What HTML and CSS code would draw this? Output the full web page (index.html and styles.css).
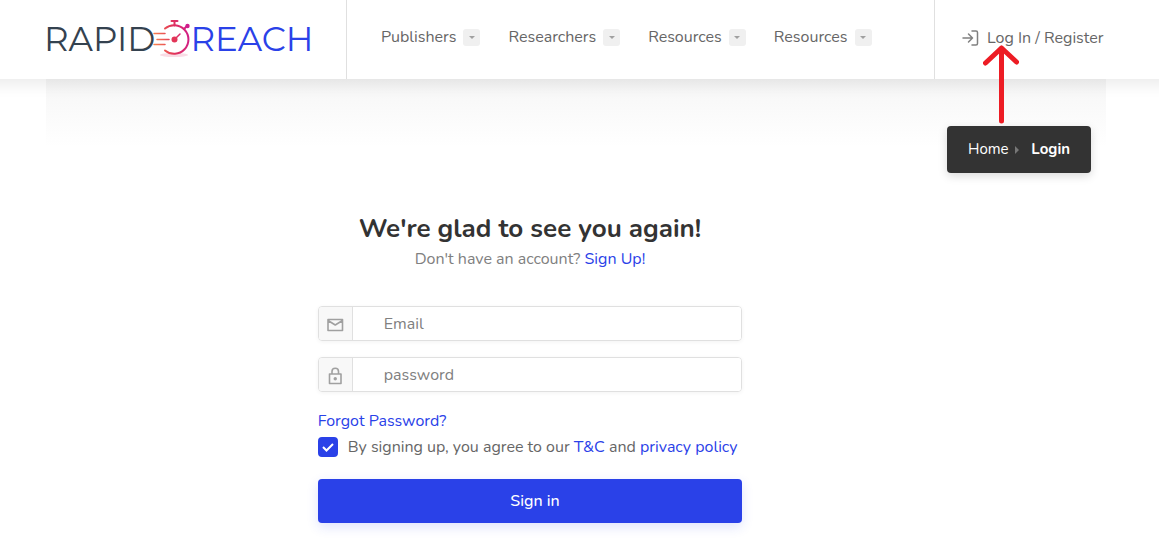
FILE: index.html
```html
<!DOCTYPE html>
<html lang="en">
<head>
  <meta charset="UTF-8">
  <meta name="viewport" content="width=device-width, initial-scale=1.0">
  <title>RapidoReach - Login</title>
  <link rel="stylesheet" href="styles.css">
</head>
<body>

  <!-- Header -->
  <header class="header">
    <a class="logo" href="#" aria-label="RapidoReach">
      <span class="logo-dark">RAPID</span>
      <svg class="logo-watch" width="40" height="40" viewBox="0 0 40 40" fill="none" stroke-linecap="round">
        <defs>
          <linearGradient id="watch" gradientUnits="userSpaceOnUse" x1="0" y1="20" x2="38" y2="16">
            <stop offset="0" stop-color="#f7864f"/>
            <stop offset="0.5" stop-color="#e23558"/>
            <stop offset="1" stop-color="#cf1c8c"/>
          </linearGradient>
        </defs>
        <ellipse cx="21" cy="36" rx="14" ry="2" fill="#f9dce5"/>
        <g stroke="url(#watch)" stroke-width="2">
          <path d="M12 9.500A14.300 14.300 0 1 1 12 31.500"/>
          <path d="M18.500 2h6M21.500 2.500v4M31 10l3-3" />
          <path d="M1 14.500h11M4 20.500h12M1 25.500h11" stroke-width="1.500"/>
          <path d="M21.500 20.500l5.500-5.500" stroke-width="1.500"/>
        </g>
        <circle cx="21.500" cy="20.500" r="3" fill="#e23558"/>
        <circle cx="34.500" cy="7" r="2.200" fill="#cf1c8c"/>
      </svg>
      <span class="logo-blue">REACH</span>
    </a>
    <nav class="nav">
      <a href="#">Publishers <span class="caret"></span></a>
      <a href="#">Researchers <span class="caret"></span></a>
      <a href="#">Resources <span class="caret"></span></a>
      <a href="#">Resources <span class="caret"></span></a>
    </nav>
    <div class="account">
      <a href="#">
        <svg width="17" height="17" viewBox="0 0 17 17" fill="none" stroke="#808080" stroke-width="1.500" stroke-linecap="round" stroke-linejoin="round">
          <path d="M1 8h9.500M6.500 4l4 4-4 4M10 1h4q1.500 0 1.500 1.500v11q0 1.500-1.500 1.500h-4"/>
        </svg>
        <span>Log In / Register</span>
      </a>
      <svg class="arrow" width="36" height="80" viewBox="0 0 36 80" fill="none" stroke="#ed1c24" stroke-width="5" stroke-linecap="round" stroke-linejoin="round">
        <path d="M18.500 76V3M2.500 18L18.500 3l15 14"/>
      </svg>
    </div>
  </header>

  <!-- Titlebar -->
  <div class="titlebar">
    <nav class="breadcrumbs" aria-label="Breadcrumb">
      <a href="#">Home</a>
      <span class="sep"></span>
      <strong>Login</strong>
    </nav>
  </div>

  <!-- Login form -->
  <main class="row">
    <form class="login">
      <h1>We're glad to see you again!</h1>
      <p class="sub">Don't have an account? <a href="#">Sign Up!</a></p>

      <div class="field">
        <label for="email" aria-label="Email">
          <svg width="18" height="18" viewBox="0 0 18 18" fill="none" stroke="currentColor" stroke-width="1.600" stroke-linejoin="round">
            <path d="M2 3.500h14.500v11H2zM2 4.500l7.250 4.500 7.250-4.500"/>
          </svg>
        </label>
        <input type="email" id="email" placeholder="Email">
      </div>
      <div class="field">
        <label for="password" aria-label="Password">
          <svg width="18" height="18" viewBox="0 0 18 18" fill="none" stroke="currentColor" stroke-width="1.600" stroke-linejoin="round">
            <path d="M3.500 7h11.500v9.500H3.500zM6 7V4.500a3.250 3.250 0 0 1 6.500 0V7"/>
            <circle cx="9.250" cy="11.700" r="1.700" fill="currentColor" stroke="none"/>
          </svg>
        </label>
        <input type="password" id="password" placeholder="password">
      </div>

      <a class="forgot" href="#">Forgot Password?</a>
      <div class="terms">
        <span class="check">
          <input type="checkbox" id="terms" checked>
          <svg width="20" height="20" viewBox="0 0 20 20" fill="none" stroke="#fff" stroke-width="2">
            <path d="M5 10l3.500 3.500L15 7"/>
          </svg>
        </span>
        <label for="terms">By signing up, you agree to our <a href="#">T&amp;C</a> and <a href="#">privacy policy</a></label>
      </div>
      <button type="submit">Sign in</button>
    </form>
  </main>

</body>
</html>
```

FILE: styles.css
```css
* {
  box-sizing: border-box;
}

body {
  margin: 0;
  font-family: Nunito, Lato, sans-serif;
  font-size: 16px;
  line-height: 26px;
  color: #666;
  background: #fff;
}

a {
  color: #2a41e8;
  text-decoration: none;
}

/* Header */
.header {
  position: relative;
  z-index: 2;
  display: flex;
  height: 79px;
  padding: 0 53px 0 44px;
  background: #fff;
  box-shadow: 0 -8px 14px 14px rgba(0, 0, 0, 0.08);
}

.logo {
  display: flex;
  align-items: center;
  width: 303px;
  padding-bottom: 1px;
  border-right: 1px solid #e0e0e0;
  font-family: Montserrat, Nunito, Lato, sans-serif;
  font-size: 34px;
  line-height: 40px;
}

.logo-dark {
  color: #34424f;
}

.logo-blue {
  color: #2a41e8;
}

.logo-watch {
  flex: none;
  margin: 0 -3px 0 -2px;
}

.nav {
  display: flex;
  flex: 1;
  gap: 28px;
  padding: 24px 0 0 34px;
}

.nav a {
  display: flex;
  align-items: center;
  gap: 7px;
  height: 26px;
  color: #666;
}

.caret {
  display: flex;
  align-items: center;
  justify-content: center;
  width: 17px;
  height: 17px;
  border-radius: 3px;
  background: #f0f0f0;
}

.caret::after {
  content: "";
  border: 3px solid transparent;
  border-top-color: #a0a0a0;
  border-bottom: 0;
}

.account {
  position: relative;
  width: 172px;
  padding: 25px 0 0 27px;
  border-left: 1px solid #e0e0e0;
}

.account a {
  display: flex;
  align-items: center;
  gap: 8px;
  color: #666;
}

.arrow {
  position: absolute;
  top: 45px;
  left: 48px;
}

/* Titlebar */
.titlebar {
  display: flex;
  justify-content: flex-end;
  align-items: flex-start;
  margin: 0 53px 0 46px;
  padding: 47px 15px 0 0;
  background: linear-gradient(#f6f6f6, #fff 68px);
}

.breadcrumbs {
  display: flex;
  align-items: center;
  width: 144px;
  height: 47px;
  padding: 0 21px 2px 21px;
  border-radius: 4px;
  background: #333;
  box-shadow: 0 3px 10px rgba(0, 0, 0, 0.15);
  font-size: 15px;
  color: #fff;
}

.breadcrumbs a {
  color: #fff;
}

.sep {
  margin: 2px auto 0 6px;
  border: 4px solid transparent;
  border-left-color: #777;
  border-right: 0;
}

/* Login form */
.row {
  margin: 0 38px 0 30px;
}

.login {
  width: 41.66%;
  margin: 39px 0 36px 25%;
  padding: 0 15px;
}

h1 {
  margin: 0;
  font-size: 26px;
  line-height: 34px;
  text-align: center;
  color: #333;
}

.sub {
  margin: 0 0 34px;
  text-align: center;
  color: #808080;
}

.field {
  display: flex;
  height: 35px;
  margin-bottom: 16px;
  border: 1px solid #e0e0e0;
  border-radius: 4px;
  box-shadow: 0 1px 4px rgba(0, 0, 0, 0.05);
  overflow: hidden;
}

.field label {
  display: flex;
  align-items: center;
  justify-content: center;
  width: 34px;
  padding-top: 3px;
  border-right: 1px solid #e0e0e0;
  background: #f8f8f8;
  color: #a0a0a0;
}

.field input {
  flex: 1;
  min-width: 0;
  padding: 0 31px;
  border: 0;
  font: inherit;
  color: #666;
}

.field input::placeholder {
  color: #808080;
}

.forgot {
  display: block;
}

.terms {
  display: flex;
  align-items: center;
  gap: 10px;
  margin-bottom: 19px;
  white-space: nowrap;
}

.check {
  display: grid;
  width: 20px;
  height: 20px;
}

.check input,
.check svg {
  grid-area: 1 / 1;
}

.check input {
  appearance: none;
  width: 20px;
  height: 20px;
  margin: 0;
  border: 2px solid #b4b4b4;
  border-radius: 4px;
}

.check input:checked {
  border-color: #2a41e8;
  background: #2a41e8;
}

.check svg {
  z-index: 1;
  pointer-events: none;
}

button {
  width: 100%;
  height: 44px;
  padding: 0 0 0 10px;
  border: 0;
  border-radius: 4px;
  background: #2a41e8;
  box-shadow: 0 4px 12px rgba(42, 65, 232, 0.15);
  font: inherit;
  font-weight: 500;
  color: #fff;
  cursor: pointer;
}
```
